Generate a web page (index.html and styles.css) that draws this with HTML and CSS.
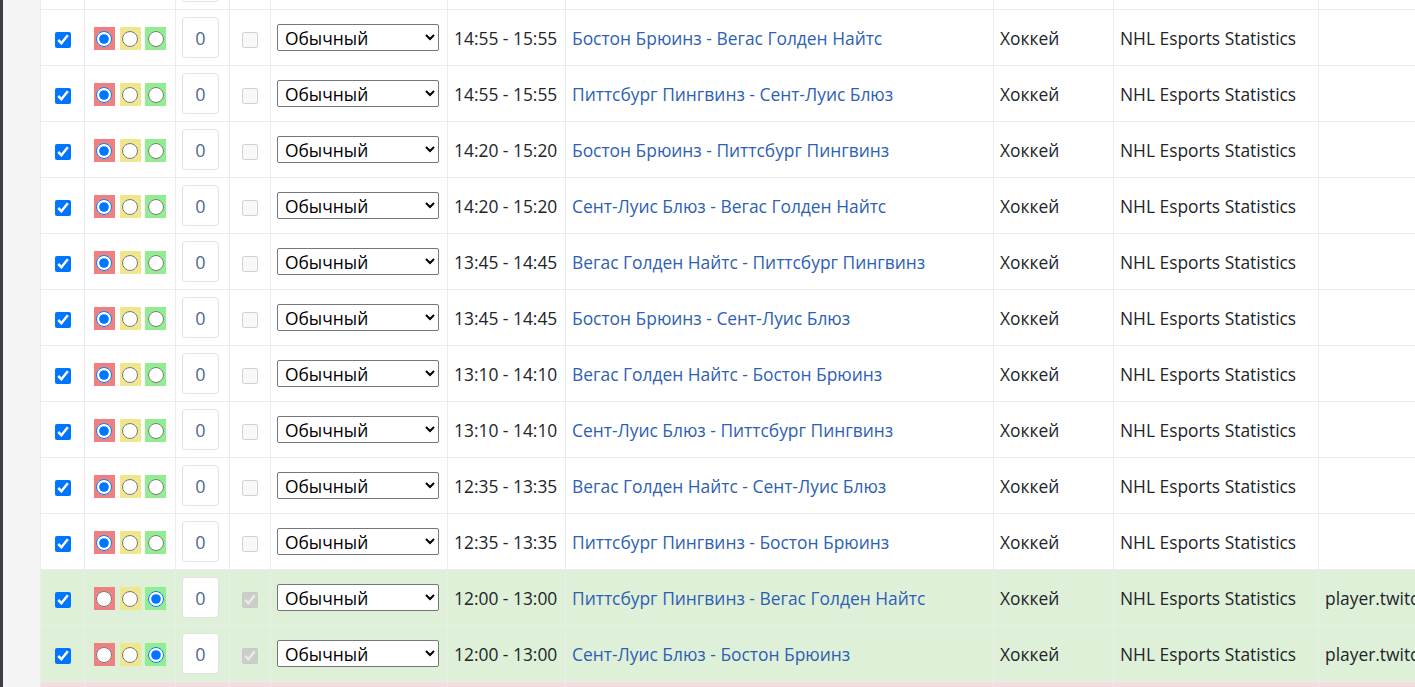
FILE: index.html
```html
<!DOCTYPE html>
<html lang="ru">
<head>
<meta charset="utf-8">
<title>Матчи</title>
<link rel="stylesheet" href="styles.css">
</head>
<body>
<div class="page">
  <div class="rail"></div>
  <div class="gutter"></div>
  <div class="viewport">
    <table class="grid">
      <colgroup>
        <col class="c-sel"><col class="c-mark"><col class="c-num"><col class="c-flag"><col class="c-type"><col class="c-time"><col class="c-match"><col class="c-sport"><col class="c-league"><col class="c-stream">
      </colgroup>
      <tbody>
        <tr class="peek">
          <td></td><td></td>
          <td><div class="num"></div></td>
          <td></td><td></td><td></td><td></td><td></td><td></td><td></td>
        </tr>
        <tr>
          <td class="center"><input type="checkbox" class="chk" checked></td>
          <td class="center"><span class="mk red"><input type="radio" name="r1" checked></span> <span class="mk yellow"><input type="radio" name="r1"></span> <span class="mk green"><input type="radio" name="r1"></span></td>
          <td><div class="num">0</div></td>
          <td class="center"><input type="checkbox" class="chk" disabled></td>
          <td><select class="sel"><option>Обычный</option></select></td>
          <td>14:55 - 15:55</td>
          <td><a href="#">Бостон Брюинз - Вегас Голден Найтс</a></td>
          <td>Хоккей</td>
          <td>NHL Esports Statistics</td>
          <td></td>
        </tr>
        <tr>
          <td class="center"><input type="checkbox" class="chk" checked></td>
          <td class="center"><span class="mk red"><input type="radio" name="r2" checked></span> <span class="mk yellow"><input type="radio" name="r2"></span> <span class="mk green"><input type="radio" name="r2"></span></td>
          <td><div class="num">0</div></td>
          <td class="center"><input type="checkbox" class="chk" disabled></td>
          <td><select class="sel"><option>Обычный</option></select></td>
          <td>14:55 - 15:55</td>
          <td><a href="#">Питтсбург Пингвинз - Сент-Луис Блюз</a></td>
          <td>Хоккей</td>
          <td>NHL Esports Statistics</td>
          <td></td>
        </tr>
        <tr>
          <td class="center"><input type="checkbox" class="chk" checked></td>
          <td class="center"><span class="mk red"><input type="radio" name="r3" checked></span> <span class="mk yellow"><input type="radio" name="r3"></span> <span class="mk green"><input type="radio" name="r3"></span></td>
          <td><div class="num">0</div></td>
          <td class="center"><input type="checkbox" class="chk" disabled></td>
          <td><select class="sel"><option>Обычный</option></select></td>
          <td>14:20 - 15:20</td>
          <td><a href="#">Бостон Брюинз - Питтсбург Пингвинз</a></td>
          <td>Хоккей</td>
          <td>NHL Esports Statistics</td>
          <td></td>
        </tr>
        <tr>
          <td class="center"><input type="checkbox" class="chk" checked></td>
          <td class="center"><span class="mk red"><input type="radio" name="r4" checked></span> <span class="mk yellow"><input type="radio" name="r4"></span> <span class="mk green"><input type="radio" name="r4"></span></td>
          <td><div class="num">0</div></td>
          <td class="center"><input type="checkbox" class="chk" disabled></td>
          <td><select class="sel"><option>Обычный</option></select></td>
          <td>14:20 - 15:20</td>
          <td><a href="#">Сент-Луис Блюз - Вегас Голден Найтс</a></td>
          <td>Хоккей</td>
          <td>NHL Esports Statistics</td>
          <td></td>
        </tr>
        <tr>
          <td class="center"><input type="checkbox" class="chk" checked></td>
          <td class="center"><span class="mk red"><input type="radio" name="r5" checked></span> <span class="mk yellow"><input type="radio" name="r5"></span> <span class="mk green"><input type="radio" name="r5"></span></td>
          <td><div class="num">0</div></td>
          <td class="center"><input type="checkbox" class="chk" disabled></td>
          <td><select class="sel"><option>Обычный</option></select></td>
          <td>13:45 - 14:45</td>
          <td><a href="#">Вегас Голден Найтс - Питтсбург Пингвинз</a></td>
          <td>Хоккей</td>
          <td>NHL Esports Statistics</td>
          <td></td>
        </tr>
        <tr>
          <td class="center"><input type="checkbox" class="chk" checked></td>
          <td class="center"><span class="mk red"><input type="radio" name="r6" checked></span> <span class="mk yellow"><input type="radio" name="r6"></span> <span class="mk green"><input type="radio" name="r6"></span></td>
          <td><div class="num">0</div></td>
          <td class="center"><input type="checkbox" class="chk" disabled></td>
          <td><select class="sel"><option>Обычный</option></select></td>
          <td>13:45 - 14:45</td>
          <td><a href="#">Бостон Брюинз - Сент-Луис Блюз</a></td>
          <td>Хоккей</td>
          <td>NHL Esports Statistics</td>
          <td></td>
        </tr>
        <tr>
          <td class="center"><input type="checkbox" class="chk" checked></td>
          <td class="center"><span class="mk red"><input type="radio" name="r7" checked></span> <span class="mk yellow"><input type="radio" name="r7"></span> <span class="mk green"><input type="radio" name="r7"></span></td>
          <td><div class="num">0</div></td>
          <td class="center"><input type="checkbox" class="chk" disabled></td>
          <td><select class="sel"><option>Обычный</option></select></td>
          <td>13:10 - 14:10</td>
          <td><a href="#">Вегас Голден Найтс - Бостон Брюинз</a></td>
          <td>Хоккей</td>
          <td>NHL Esports Statistics</td>
          <td></td>
        </tr>
        <tr>
          <td class="center"><input type="checkbox" class="chk" checked></td>
          <td class="center"><span class="mk red"><input type="radio" name="r8" checked></span> <span class="mk yellow"><input type="radio" name="r8"></span> <span class="mk green"><input type="radio" name="r8"></span></td>
          <td><div class="num">0</div></td>
          <td class="center"><input type="checkbox" class="chk" disabled></td>
          <td><select class="sel"><option>Обычный</option></select></td>
          <td>13:10 - 14:10</td>
          <td><a href="#">Сент-Луис Блюз - Питтсбург Пингвинз</a></td>
          <td>Хоккей</td>
          <td>NHL Esports Statistics</td>
          <td></td>
        </tr>
        <tr>
          <td class="center"><input type="checkbox" class="chk" checked></td>
          <td class="center"><span class="mk red"><input type="radio" name="r9" checked></span> <span class="mk yellow"><input type="radio" name="r9"></span> <span class="mk green"><input type="radio" name="r9"></span></td>
          <td><div class="num">0</div></td>
          <td class="center"><input type="checkbox" class="chk" disabled></td>
          <td><select class="sel"><option>Обычный</option></select></td>
          <td>12:35 - 13:35</td>
          <td><a href="#">Вегас Голден Найтс - Сент-Луис Блюз</a></td>
          <td>Хоккей</td>
          <td>NHL Esports Statistics</td>
          <td></td>
        </tr>
        <tr>
          <td class="center"><input type="checkbox" class="chk" checked></td>
          <td class="center"><span class="mk red"><input type="radio" name="r10" checked></span> <span class="mk yellow"><input type="radio" name="r10"></span> <span class="mk green"><input type="radio" name="r10"></span></td>
          <td><div class="num">0</div></td>
          <td class="center"><input type="checkbox" class="chk" disabled></td>
          <td><select class="sel"><option>Обычный</option></select></td>
          <td>12:35 - 13:35</td>
          <td><a href="#">Питтсбург Пингвинз - Бостон Брюинз</a></td>
          <td>Хоккей</td>
          <td>NHL Esports Statistics</td>
          <td></td>
        </tr>
        <tr class="live">
          <td class="center"><input type="checkbox" class="chk" checked></td>
          <td class="center"><span class="mk red"><input type="radio" name="r11"></span> <span class="mk yellow"><input type="radio" name="r11"></span> <span class="mk green"><input type="radio" name="r11" checked></span></td>
          <td><div class="num">0</div></td>
          <td class="center"><input type="checkbox" class="chk" checked disabled></td>
          <td><select class="sel"><option>Обычный</option></select></td>
          <td>12:00 - 13:00</td>
          <td><a href="#">Питтсбург Пингвинз - Вегас Голден Найтс</a></td>
          <td>Хоккей</td>
          <td>NHL Esports Statistics</td>
          <td class="clip">player.twitch.tv</td>
        </tr>
        <tr class="live">
          <td class="center"><input type="checkbox" class="chk" checked></td>
          <td class="center"><span class="mk red"><input type="radio" name="r12"></span> <span class="mk yellow"><input type="radio" name="r12"></span> <span class="mk green"><input type="radio" name="r12" checked></span></td>
          <td><div class="num">0</div></td>
          <td class="center"><input type="checkbox" class="chk" checked disabled></td>
          <td><select class="sel"><option>Обычный</option></select></td>
          <td>12:00 - 13:00</td>
          <td><a href="#">Сент-Луис Блюз - Бостон Брюинз</a></td>
          <td>Хоккей</td>
          <td>NHL Esports Statistics</td>
          <td class="clip">player.twitch.tv</td>
        </tr>
        <tr class="ended">
          <td></td><td></td><td></td><td></td><td></td><td></td><td></td><td></td><td></td><td></td>
        </tr>
      </tbody>
    </table>
  </div>
</div>
</body>
</html>
```

FILE: styles.css
```css
html, body {
  margin: 0;
  padding: 0;
  height: 100%;
  overflow: hidden;
  background: #ffffff;
}

.page {
  display: flex;
  height: 687px;
  overflow: hidden;
  font-family: "Open Sans", "Noto Sans", sans-serif;
  font-size: 17.4px;
  color: #212529;
}

.rail {
  flex: 0 0 3px;
  background: #3b4046;
}

.gutter {
  flex: 0 0 37px;
  background: #f4f4f4;
}

.viewport {
  flex: 1 1 auto;
  overflow: hidden;
  min-width: 0;
}

.grid {
  border-collapse: collapse;
  table-layout: fixed;
  width: 1578px;
  margin-top: -47px;
}

.c-sel { width: 44px; }
.c-mark { width: 91px; }
.c-num { width: 54px; }
.c-flag { width: 41px; }
.c-type { width: 177px; }
.c-time { width: 118px; }
.c-match { width: 428px; }
.c-sport { width: 120px; }
.c-league { width: 205px; }
.c-stream { width: 300px; }

.grid td {
  border: 1px solid #ececec;
  height: 56px;
  padding: 0 6px;
  vertical-align: middle;
  white-space: nowrap;
  box-sizing: border-box;
}

.grid td.center {
  text-align: center;
  padding: 0;
}

.grid td.clip {
  overflow: hidden;
}

.live td {
  background: #dff0d8;
  border-color: #e9efe6;
}

.ended td {
  background: #f2dede;
}

.chk {
  width: 16px;
  height: 16px;
  margin: 0;
  vertical-align: middle;
}

.mk {
  display: inline-flex;
  align-items: center;
  justify-content: center;
  width: 21px;
  height: 23px;
  vertical-align: middle;
}

.mk input {
  width: 16px;
  height: 16px;
  margin: 0;
}

.mk.red { background: #f08080; }
.mk.yellow { background: #f0e68c; }
.mk.green { background: #90ee90; }

.num {
  width: 37px;
  height: 41px;
  box-sizing: border-box;
  border: 1px solid #e2e2e2;
  border-radius: 4px;
  background: #ffffff;
  display: flex;
  align-items: center;
  justify-content: center;
  color: #4f6a92;
  font-size: 18px;
}

.sel {
  width: 162px;
  height: 27px;
  font-family: "Open Sans", "Noto Sans", sans-serif;
  font-size: 17.4px;
  color: #000;
  background: #ffffff;
  border: 1px solid #767676;
  border-radius: 2px;
  padding: 0 0 0 3px;
  vertical-align: middle;
}

.grid a {
  color: #2d5fb5;
  text-decoration: none;
}
```
